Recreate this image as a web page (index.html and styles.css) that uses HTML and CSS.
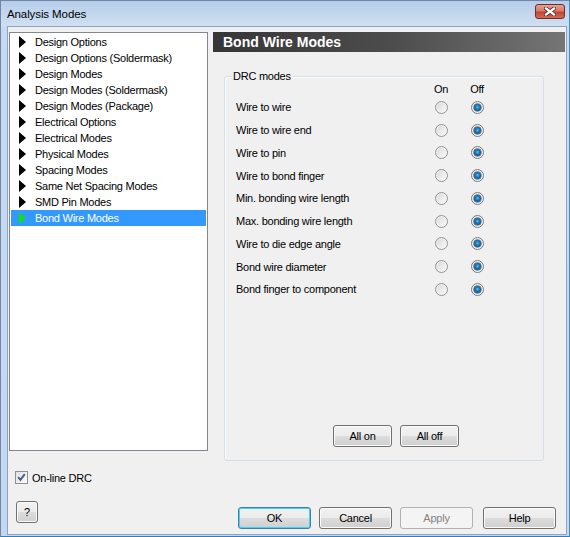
FILE: index.html
```html
<!DOCTYPE html>
<html>
<head>
<meta charset="utf-8">
<link rel="stylesheet" href="styles.css">
</head>
<body>
<div class="window">
  <div class="titlebar">
    <span class="title">Analysis Modes</span>
    <span class="close">
      <svg width="12" height="9" viewBox="0 0 12 9">
        <path d="M2 1.5 L10 7.5 M10 1.5 L2 7.5" stroke="#5a2a26" stroke-width="4" stroke-linecap="square"/>
        <path d="M2 1.5 L10 7.5 M10 1.5 L2 7.5" stroke="#ffffff" stroke-width="2.2" stroke-linecap="square"/>
      </svg>
    </span>
  </div>
  <div class="client">
    <div class="main">
      <ul class="tree">
        <li><span class="arrow"></span>Design Options</li>
        <li><span class="arrow"></span>Design Options (Soldermask)</li>
        <li><span class="arrow"></span>Design Modes</li>
        <li><span class="arrow"></span>Design Modes (Soldermask)</li>
        <li><span class="arrow"></span>Design Modes (Package)</li>
        <li><span class="arrow"></span>Electrical Options</li>
        <li><span class="arrow"></span>Electrical Modes</li>
        <li><span class="arrow"></span>Physical Modes</li>
        <li><span class="arrow"></span>Spacing Modes</li>
        <li><span class="arrow"></span>Same Net Spacing Modes</li>
        <li><span class="arrow"></span>SMD Pin Modes</li>
        <li class="selected"><span class="arrow"></span>Bond Wire Modes</li>
      </ul>
      <div class="page">
        <div class="page-head">Bond Wire Modes</div>
        <div class="group">
          <span class="legend">DRC modes</span>
          <div class="grid">
            <span></span><span class="colhead">On</span><span class="colhead">Off</span>
            <span class="label">Wire to wire</span><span class="radio"></span><span class="radio checked"></span>
            <span class="label">Wire to wire end</span><span class="radio"></span><span class="radio checked"></span>
            <span class="label">Wire to pin</span><span class="radio"></span><span class="radio checked"></span>
            <span class="label">Wire to bond finger</span><span class="radio"></span><span class="radio checked"></span>
            <span class="label">Min. bonding wire length</span><span class="radio"></span><span class="radio checked"></span>
            <span class="label">Max. bonding wire length</span><span class="radio"></span><span class="radio checked"></span>
            <span class="label">Wire to die edge angle</span><span class="radio"></span><span class="radio checked"></span>
            <span class="label">Bond wire diameter</span><span class="radio"></span><span class="radio checked"></span>
            <span class="label">Bond finger to component</span><span class="radio"></span><span class="radio checked"></span>
          </div>
          <div class="group-buttons">
            <button class="btn small">All on</button>
            <button class="btn small">All off</button>
          </div>
        </div>
      </div>
    </div>
    <div class="check-row">
      <span class="checkbox">
        <svg width="11" height="11" viewBox="0 0 11 11">
          <path d="M2.2 5.2 L4.4 7.8 L8.8 2.2" fill="none" stroke="#4a5e92" stroke-width="2"/>
        </svg>
      </span>
      <span class="check-label">On-line DRC</span>
    </div>
    <div class="bottom">
      <button class="btn qbtn">?</button>
      <div class="actions">
        <button class="btn wide default">OK</button>
        <button class="btn wide">Cancel</button>
        <button class="btn wide disabled">Apply</button>
        <button class="btn wide help">Help</button>
      </div>
    </div>
  </div>
</div>
</body>
</html>
```

FILE: styles.css
```css
* { box-sizing: border-box; }

html, body {
  margin: 0;
  padding: 0;
  background: #c6d9ef;
}

body {
  font-family: "Liberation Sans", Arial, sans-serif;
  font-size: 11px;
  letter-spacing: -0.25px;
  color: #000;
}

.window {
  width: 570px;
  height: 537px;
  display: flex;
  flex-direction: column;
  border-left: 1px solid #6f86a6;
  border-top: 1px solid #6f86a6;
  border-right: 1px solid #3c93d2;
  border-bottom: 1px solid #2f7fc0;
  padding: 0 2px 1px 6px;
  background: linear-gradient(to bottom, #b6cde9 0px, #cfdff2 24px, #c7daf0 26px, #c3d8ef 100%);
}

.titlebar {
  height: 25px;
  display: flex;
  align-items: flex-start;
  justify-content: space-between;
  flex: none;
}

.title {
  font-size: 11.5px;
  letter-spacing: -0.1px;
  line-height: 25px;
  padding-top: 1px;
  color: #000;
}

.close {
  margin-top: 3px;
  margin-right: 2px;
  width: 30px;
  height: 15px;
  border: 1px solid #6e2d27;
  border-radius: 3px;
  background: linear-gradient(to bottom, #e3a195 0%, #d67a6c 45%, #c24433 55%, #cf6a56 100%);
  display: flex;
  align-items: center;
  justify-content: center;
}

.close svg { display: block; }

.client {
  flex: 1;
  background: #f0f0f0;
  border: 1px solid #8ea4c2;
  padding: 5px 1px 0 1px;
  display: flex;
  flex-direction: column;
}

.main {
  display: flex;
  gap: 5px;
  align-items: flex-start;
  height: 429px;
  flex: none;
}

.tree {
  list-style: none;
  margin: 0;
  padding: 1px;
  width: 199px;
  height: 419px;
  border: 1px solid #828790;
  background: #fff;
}

.tree li {
  height: 16px;
  line-height: 16px;
  display: flex;
  align-items: center;
  padding-left: 8px;
  white-space: nowrap;
}

.arrow {
  width: 0;
  height: 0;
  border-top: 6px solid transparent;
  border-bottom: 6px solid transparent;
  border-left: 7px solid #000;
  margin-right: 9px;
  flex: none;
}

.tree li.selected {
  background: #3399ff;
  color: #fff;
}

.tree li.selected .arrow {
  border-left-color: #11e011;
}

.page {
  width: 352px;
  display: flex;
  flex-direction: column;
}

.page-head {
  height: 20px;
  line-height: 20px;
  padding-left: 10px;
  background: linear-gradient(to right, #363636 0%, #4c4c4c 50%, #757575 100%);
  color: #fff;
  font-weight: bold;
  font-size: 14px;
  letter-spacing: 0;
}

.group {
  position: relative;
  margin: 24px 0 0 11px;
  width: 320px;
  height: 385px;
  border: 1px solid #d5dfe5;
  border-radius: 3px;
  box-shadow: inset 1px 1px 0 #fbfcfd;
  padding: 6px 0 13px 11px;
  display: flex;
  flex-direction: column;
}

.legend {
  position: absolute;
  top: -7px;
  left: 7px;
  padding: 0 1px;
  background: #f0f0f0;
  line-height: 13px;
}

.grid {
  display: grid;
  grid-template-columns: 181px 24px 24px;
  column-gap: 12px;
  grid-template-rows: 13px;
  grid-auto-rows: 22.75px;
  align-items: center;
}

.colhead {
  text-align: center;
  line-height: 13px;
}

.label {
  white-space: nowrap;
}

.radio {
  justify-self: center;
  width: 13px;
  height: 13px;
  border-radius: 50%;
  border: 1px solid #929292;
  background: linear-gradient(135deg, #d6d6d6 0%, #ececec 55%, #fafafa 100%);
  box-shadow: inset 0 0 0 1px #f4f4f4;
  position: relative;
}

.radio.checked {
  border-color: #7a7a7a;
}

.radio.checked::after {
  content: "";
  position: absolute;
  left: 2px;
  top: 2px;
  width: 7px;
  height: 7px;
  border-radius: 50%;
  background: radial-gradient(circle at 50% 45%, #5fc0ee 0%, #1e7fbf 35%, #0c4b80 75%, #0a3358 100%);
  box-shadow: 0 0 0 0.5px #1a3450;
}

.group-buttons {
  margin-top: auto;
  margin-left: 97px;
  display: flex;
  gap: 8px;
}

.btn {
  font-family: "Liberation Sans", Arial, sans-serif;
  font-size: 11px;
  letter-spacing: -0.25px;
  color: #000;
  border: 1px solid #707070;
  border-radius: 3px;
  background: linear-gradient(to bottom, #f2f2f2 0%, #ebebeb 50%, #dddddd 50%, #cfcfcf 100%);
  box-shadow: inset 0 0 0 1px #fbfbfb;
  padding: 0;
  margin: 0;
}

.btn.small {
  width: 59px;
  height: 22px;
}

.check-row {
  margin-top: 10px;
  margin-left: 6px;
  display: flex;
  align-items: center;
  height: 13px;
}

.checkbox {
  width: 13px;
  height: 13px;
  border: 1px solid #8e8f8f;
  background: linear-gradient(135deg, #e0e0e0 0%, #f4f4f4 70%, #ffffff 100%);
  display: flex;
  align-items: center;
  justify-content: center;
  margin-right: 4px;
}

.checkbox svg { display: block; }

.bottom {
  margin-top: 17px;
  display: flex;
  align-items: flex-start;
  padding-left: 7px;
  padding-right: 9px;
}

.qbtn {
  width: 22px;
  height: 22px;
}

.actions {
  margin-left: auto;
  margin-top: 6px;
  display: flex;
  gap: 8px;
}

.btn.wide {
  width: 73px;
  height: 22px;
}

.btn.help {
  margin-left: 2px;
}

.btn.default {
  border-color: #3c7fb1;
  box-shadow: inset 0 0 0 1px #48d0f7;
}

.btn.disabled {
  border-color: #adb2b5;
  background: #f4f4f4;
  box-shadow: none;
  color: #838383;
}
```
